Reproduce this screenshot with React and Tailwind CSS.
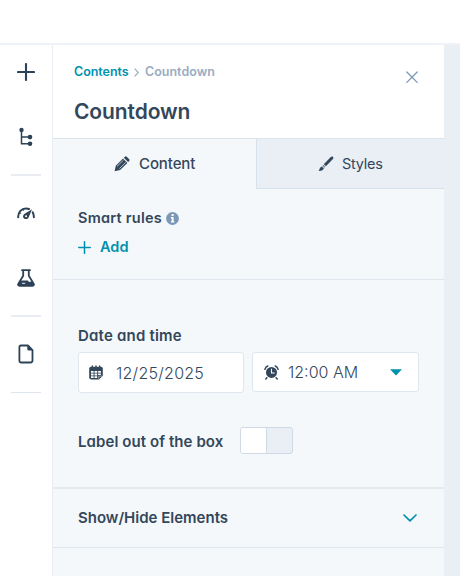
import React, { useState } from 'react';

function PlusIcon({ size, strokeWidth }) {
    return (
        <svg width={size} height={size} viewBox="0 0 18 18" fill="none" stroke="currentColor" strokeWidth={strokeWidth} strokeLinecap="round">
            <path d="M9 1v16M1 9h16" />
        </svg>
    );
}

function TreeIcon() {
    return (
        <svg width="14" height="20" viewBox="0 0 14 20" fill="none" stroke="currentColor" strokeWidth="1.5">
            <path d="M2.5 3v13.7H11M2.5 10H11" />
            <g fill="currentColor" stroke="none">
                <circle cx="2.5" cy="2.9" r="2.2" />
                <circle cx="11" cy="10.1" r="2.3" />
                <circle cx="11" cy="16.7" r="2.3" />
            </g>
        </svg>
    );
}

function GaugeIcon() {
    return (
        <svg width="18" height="12" viewBox="0 0 18 12" fill="none" stroke="currentColor" strokeWidth="2" strokeLinecap="round">
            <path d="M1.1 10.2C1.1 5 4.5 1.4 9 1.4c1.2 0 2.2.2 3 .6M15.7 5.2c.8 1.5 1.2 3.1 1.2 5" />
            <path d="M2.6 5.6l1.2.9M5.8 2.4l.5 1" strokeWidth="1" />
            <path d="M15 2.2L7.3 7a2.9 2.9 0 1 0 4.3 3.6z" fill="currentColor" stroke="none" />
            <circle cx="9.1" cy="9.2" r="1" fill="white" stroke="none" />
        </svg>
    );
}

function FlaskIcon() {
    return (
        <svg width="18" height="18" viewBox="0 0 18 18" fill="none" stroke="currentColor" strokeWidth="1.8" strokeLinejoin="round" strokeLinecap="round">
            <path d="M5 1.2h8M6.2 1.5v5.2L1.4 14.6c-.7 1.2-.2 2.2 1.1 2.2h13c1.3 0 1.8-1 1.1-2.2L11.8 6.7V1.5" />
            <path d="M3.3 11.6h7.7l1 1.3 3-.7 2 3.2-.8 1.4H1.7L1 15.4z" fill="currentColor" stroke="none" />
            <path d="M5.4 14.3h2.4" stroke="white" strokeWidth=".9" />
        </svg>
    );
}

function PageIcon() {
    return (
        <svg width="16" height="20" viewBox="0 0 16 20" fill="none" stroke="currentColor" strokeWidth="1.8" strokeLinejoin="round">
            <path d="M2.9 1.5h7l4.6 4.7v10.4a1.9 1.9 0 0 1-1.9 1.9H2.9A1.5 1.5 0 0 1 1.4 17V3a1.5 1.5 0 0 1 1.5-1.5z" />
            <path d="M9.3 1.5v3.6a1.5 1.5 0 0 0 1.5 1.5h3.8z" fill="currentColor" stroke="none" />
        </svg>
    );
}

function PencilIcon() {
    return (
        <svg width="16" height="16" viewBox="0 0 16 16" fill="currentColor">
            <path d="M.6 15.2l1.2-5.4L9 2.6l4.4 4.3-7.3 7.2z" />
            <path d="M9.8 1.8l.9-.9a1.7 1.7 0 0 1 2.3 0l2 2a1.6 1.6 0 0 1 0 2.3l-.9.9z" />
            <path d="M3 10.4l6.4-6.2M5.4 12.6l6.4-6.3" stroke="#f5f8fa" strokeWidth=".65" />
        </svg>
    );
}

function BrushIcon() {
    return (
        <svg width="16" height="16" viewBox="0 0 16 16" fill="currentColor">
            <path d="M5.8 8.2L12.5 1.2c.9-.8 2-.9 2.5-.3.6.6.5 1.5-.3 2.4L7.9 10.3z" />
            <path d="M5.3 8.8l2 2-1.1 1.1L4.3 10z" opacity=".6" />
            <path d="M3.9 10.4l2 2c-.4 1.2-1.8 2.3-5.2 2.7.7-1.5 1-4.1 3.2-4.7z" />
        </svg>
    );
}

function CalendarIcon() {
    return (
        <svg width="14" height="15" viewBox="0 0 14 15" fill="currentColor">
            <path d="M2 1.8h10a1.8 1.8 0 0 1 1.8 1.8v7.1L10.1 14.4H2a1.8 1.8 0 0 1-1.8-1.8v-9A1.8 1.8 0 0 1 2 1.8z" />
            <path d="M3.3.8v2M7 .8v2M10.7.8v2" stroke="currentColor" strokeWidth="1.3" strokeLinecap="round" />
            <path d="M2 5.9h2.6v1.9H2zM5.5 5.9h2.7v1.9H5.5zM9.1 5.9h2.8v1.9H9.1zM2 8.6h2.6v1.8H2zM5.5 8.6h2.7v1.8H5.5zM9.1 8.6h2.8v1.5H9.1zM2 11.2h2.6v1.7H2zM5.5 11.2h2.7v1.7H5.5z" fill="white" />
            <path d="M9.8 13.9v-2.8h3.3" fill="none" stroke="white" strokeWidth=".5" />
        </svg>
    );
}

function AlarmIcon() {
    return (
        <svg width="15" height="15" viewBox="0 0 15 15" fill="none" stroke="currentColor" strokeLinecap="round">
            <circle cx="7.5" cy="7.4" r="5.5" fill="currentColor" stroke="none" />
            <path d="M.9 4.3C1.3 2.6 2.2 1.6 3.8 1M14.1 4.3c-.4-1.7-1.3-2.7-2.9-3.3M2.8 12.7l-1 1.2M12.2 12.7l1 1.2" strokeWidth="1.5" />
            <path d="M7.5 4v4h2.8" stroke="white" strokeWidth="1.1" />
        </svg>
    );
}

function InfoIcon() {
    return (
        <svg width="13" height="13" viewBox="0 0 13 13">
            <circle cx="6.5" cy="6.5" r="6.4" fill="#7c98b6" />
            <path d="M5.6 2h2v2h-2zM4.9 5.1h2.7v4.2h.7v1.3H4.9V9.3h.8V6.4h-.8z" fill="white" />
        </svg>
    );
}

function Sidebar() {
    return (
        <nav className="flex w-[53px] shrink-0 flex-col items-center border-r border-[#e9edf4] bg-white text-[#2d4256]">
            <button className="mt-[18px]"><PlusIcon size={18} strokeWidth={2.1} /></button>
            <button className="mt-[46px]"><TreeIcon /></button>
            <hr className="mt-[27px] h-[2px] w-[30px] border-0 bg-[#e9ecf3]" />
            <button className="mt-[31px]"><GaugeIcon /></button>
            <button className="mt-[50px]"><FlaskIcon /></button>
            <hr className="mt-[28px] h-[2px] w-[30px] border-0 bg-[#e9ecf3]" />
            <button className="mt-[27px]"><PageIcon /></button>
            <hr className="mt-[28px] h-px w-[30px] border-0 bg-[#dfe5ee]" />
        </nav>
    );
}

function PanelHeader() {
    return (
        <header className="flex h-[94px] justify-between border-b border-[#dbe4ed] bg-white pl-[21px] pr-[26px]">
            <div>
                <div className="mt-[17px] flex h-5 items-center text-[12.5px] font-semibold">
                    <a className="w-[55px] tracking-[-0.05px] text-[#0091ae]">Contents</a>
                    <svg className="ml-[5px] mr-[6px]" width="5" height="9" viewBox="0 0 5 9" fill="none" stroke="#99acc2" strokeWidth="1.2">
                        <path d="M.7.7l3.5 3.8L.7 8.3" />
                    </svg>
                    <span className="text-[#99acc2]">Countdown</span>
                </div>
                <h1 className="mt-[14px] text-[21px] font-semibold leading-8 tracking-[-0.1px]">Countdown</h1>
            </div>
            <button className="mt-[26px] h-3 w-3">
                <svg width="12" height="12" viewBox="0 0 12 12" fill="none" stroke="#7c98b6" strokeWidth="1.3" strokeLinecap="round">
                    <path d="M.8 1l10.4 10.4M11.2 1L.8 11.4" />
                </svg>
            </button>
        </header>
    );
}

export default function App() {
    const [tab, setTab] = useState('content');
    const [labelOut, setLabelOut] = useState(false);

    return (
        <div className="flex h-[576px] w-[460px] flex-col overflow-hidden bg-white font-['Inter',sans-serif] text-[#33475b] [font-feature-settings:'cv11']">
            <div className="h-[45px] shrink-0 border-b-2 border-[#eff2f7]" />

            <div className="flex min-h-0 flex-1">
                <Sidebar />

                <main className="w-[391px] shrink-0 bg-[#f5f8fb]">
                    <PanelHeader />

                    {/* Tabs */}
                    <div className="flex h-[50px] text-[15px]">
                        <button className="flex w-[203px] items-center pl-[61px] font-medium" onClick={() => setTab('content')}>
                            <PencilIcon />
                            <span className="ml-[9px] tracking-[-0.1px]">Content</span>
                        </button>
                        <button
                            className="flex flex-1 items-center border-b border-l border-[#d6e1eb] bg-[#eaeff6] pl-[61px]"
                            onClick={() => setTab('styles')}
                            aria-selected={tab === 'styles'}
                        >
                            <BrushIcon />
                            <span className="ml-[8px] text-[14.5px] tracking-[-0.25px]">Styles</span>
                        </button>
                    </div>

                    {/* Smart rules */}
                    <section className="h-[91px] border-b border-[#dfe5ec] pl-[25px] pt-[19px]">
                        <div className="flex h-5 items-center text-[14.5px] font-semibold">
                            <span className="w-[88px] tracking-[0.25px]">Smart rules</span>
                            <InfoIcon />
                        </div>
                        <button className="mt-[9px] flex h-5 items-center gap-[9px] text-[14.5px] font-semibold text-[#0091ae]">
                            <PlusIcon size={13} strokeWidth={2.1} />
                            <span>Add</span>
                        </button>
                    </section>

                    {/* Date and time */}
                    <section className="h-[209px] border-b-2 border-[#e6ebf0] pl-[25px] pt-[46px]">
                        <div className="h-5 text-[15px] font-semibold leading-5 tracking-[0.2px]">Date and time</div>
                        <div className="mt-[6px] flex gap-2 text-[16px]">
                            <div className="flex h-[41px] w-[166px] items-center rounded-[3px] border border-[#dfe6ee] bg-white pl-[10px]">
                                <CalendarIcon />
                                <span className="ml-[13px] font-light tracking-[0.25px]">12/25/2025</span>
                            </div>
                            <div className="flex h-[40px] w-[167px] items-center rounded-[3px] border border-[#dfe6ee] bg-white pl-[11px] pr-[16px]">
                                <AlarmIcon />
                                <span className="ml-[9px] font-light">12:00 AM</span>
                                <svg className="ml-auto" width="12" height="7" viewBox="0 0 12 7">
                                    <path d="M0 .3h12L6 6.5z" fill="#0091ae" />
                                </svg>
                            </div>
                        </div>
                        <div className="mt-[34px] flex items-center">
                            <span className="w-[162px] pt-[4px] text-[15px] font-semibold tracking-[0.08px]">Label out of the box</span>
                            <button
                                className="flex h-[27px] w-[53px] rounded-[3px] border border-[#cfdae6] bg-[#eaeff6]"
                                onClick={() => setLabelOut(!labelOut)}
                            >
                                <span className={labelOut ? 'ml-auto h-full w-[26px] rounded-[2px] bg-white' : 'h-full w-[26px] rounded-[2px] border-r border-[#cfdae6] bg-white'} />
                            </button>
                        </div>
                    </section>

                    <section className="flex h-[59px] items-center justify-between border-b border-[#dfe5ec] pl-[25px] pr-[27px]">
                        <span className="text-[15px] font-semibold">Show/Hide Elements</span>
                        <svg width="14" height="8" viewBox="0 0 14 8" fill="none" stroke="#0091ae" strokeWidth="1.7" strokeLinecap="round" strokeLinejoin="round">
                            <path d="M1 1l6 5.8L13 1" />
                        </svg>
                    </section>
                </main>

                <div className="flex-1 bg-[#eaeff6]" />
            </div>
        </div>
    );
}
